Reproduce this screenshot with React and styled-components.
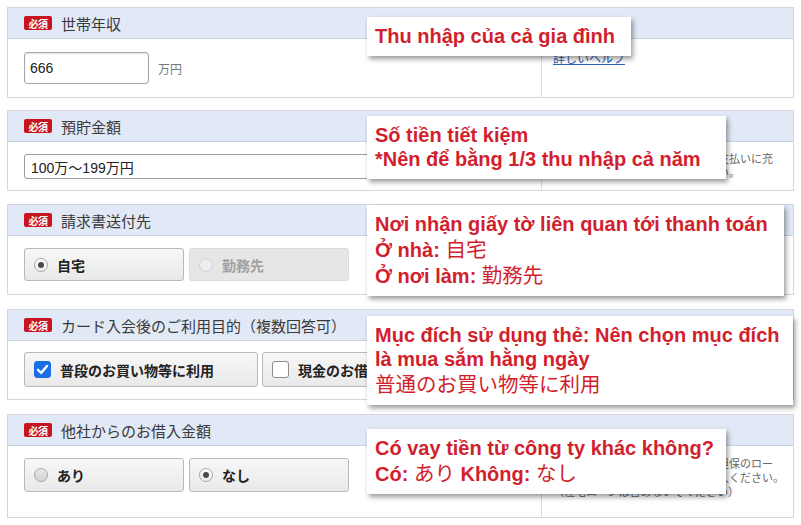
import React from "react";
import styled, { createGlobalStyle, css } from "styled-components";

const Global = createGlobalStyle`
  html, body { margin: 0; padding: 0; background: #fff; }
  body { font-family: "Liberation Sans", "Noto Sans CJK JP", sans-serif; color: #333; }
  * { box-sizing: border-box; }
`;

const Page = styled.div`
  padding: 7px 0 0 7px;
  width: 801px;
`;

const Card = styled.section`
  position: relative;
  width: 787px;
  border: 1px solid #d3d7dd;
  margin-bottom: ${(p) => p.$gap || 13}px;
  background: #fff;
`;

const Header = styled.header`
  height: 31px;
  display: flex;
  align-items: center;
  gap: 9px;
  padding-left: 16px;
  background: #e1e8f6;
  border-bottom: 1px solid #c9d1de;
`;

const Badge = styled.span`
  display: inline-flex;
  align-items: center;
  justify-content: center;
  width: 28px;
  height: 14px;
  border-radius: 2px;
  background: #c8141e;
  color: #fff;
  font-size: 10px;
  font-weight: bold;
  font-family: "Noto Sans CJK JP", sans-serif;
  letter-spacing: -0.5px;
`;

const Title = styled.h2`
  margin: 0;
  font-size: 15px;
  font-weight: normal;
  color: #3a3a3a;
  font-family: "Noto Sans CJK JP", sans-serif;
`;

const Body = styled.div`
  display: grid;
  grid-template-columns: 533px 1fr;
`;

const Main = styled.div`
  display: flex;
  align-items: ${(p) => p.$align || "center"};
  gap: 9px;
  padding: ${(p) => p.$pad || "13px 16px"};
`;

const Side = styled.div`
  border-left: 1px solid #dcdcdc;
  padding: ${(p) => p.$pad || "12px 12px 12px 11px"};
  font-size: 11px;
  line-height: 14px;
  color: #666;
  white-space: nowrap;
  font-family: "Noto Sans CJK JP", sans-serif;
`;

const HelpLink = styled.a`
  color: #2f62b8;
  text-decoration: underline;
  font-size: 12px;
  font-family: "Noto Sans CJK JP", sans-serif;
`;

const TextInput = styled.div`
  width: 125px;
  height: 32px;
  border: 1px solid #a9a9a9;
  border-radius: 3px;
  box-shadow: inset 0 1px 2px rgba(0, 0, 0, 0.12);
  display: flex;
  align-items: center;
  padding-left: 5px;
  font-size: 14px;
  color: #222;
`;

const Unit = styled.span`
  font-size: 12px;
  color: #777;
  font-family: "Noto Sans CJK JP", sans-serif;
`;

const Select = styled.div`
  width: 100%;
  height: 25px;
  border: 1px solid #9a9a9a;
  border-radius: 3px;
  display: flex;
  align-items: center;
  padding-left: 6px;
  font-size: 14px;
  color: #222;
`;

const Choices = styled.div`
  display: flex;
  gap: ${(p) => p.$gap || 5}px;
`;

const ChoiceButton = styled.div`
  width: ${(p) => p.$w}px;
  height: ${(p) => p.$h}px;
  border-radius: 3px;
  display: flex;
  align-items: center;
  gap: 9px;
  padding-left: 9px;
  font-size: 14px;
  font-weight: bold;
  font-family: "Noto Sans CJK JP", sans-serif;
  ${(p) =>
    p.$disabled
      ? css`
          background: #e6e6e6;
          border: 1px solid #dadada;
          color: #a0a0a0;
        `
      : css`
          background: linear-gradient(#f7f7f7, #e9e9e9);
          border: 1px solid #b9b9b9;
          color: #222;
        `}
`;

const Radio = styled.span`
  width: 14px;
  height: 14px;
  border-radius: 50%;
  flex: none;
  display: flex;
  align-items: center;
  justify-content: center;
  border: 1px solid ${(p) => (p.$disabled ? "#cfcfcf" : "#a8a8a8")};
  background: ${(p) =>
    p.$checked
      ? "linear-gradient(#fdfdfd, #ececec)"
      : p.$disabled
      ? "#ececec"
      : "linear-gradient(#e8e8e8, #d2d2d2)"};
  &::after {
    content: "";
    display: ${(p) => (p.$checked ? "block" : "none")};
    width: 6px;
    height: 6px;
    border-radius: 50%;
    background: #4a4a4a;
  }
`;

const Check = styled.span`
  width: 17px;
  height: 17px;
  border-radius: 3px;
  flex: none;
  display: flex;
  align-items: center;
  justify-content: center;
  background: ${(p) => (p.$checked ? "#1b6fe6" : "#fff")};
  border: 1px solid ${(p) => (p.$checked ? "#1b6fe6" : "#8c8c8c")};
`;

const Note = styled.div`
  position: absolute;
  left: 359px;
  top: ${(p) => p.$top}px;
  width: ${(p) => p.$w}px;
  background: #fff;
  padding: 7px 8px 8px;
  box-shadow: 2px 3px 5px rgba(0, 0, 0, 0.4);
  color: #d21f2d;
  font-family: "Liberation Sans", "Noto Sans CJK JP", sans-serif;
  font-size: 20px;
  font-weight: bold;
  line-height: 24px;
  white-space: nowrap;
  z-index: 2;
`;

const NoteLine = styled.div``;

const Jp = styled.span`
  font-family: "Noto Sans CJK JP", sans-serif;
  font-weight: normal;
  font-size: 20.5px;
`;

const CheckMark = () => (
  <svg width="13" height="13" viewBox="0 0 13 13">
    <path d="M2 6.8 L5.2 10 L11 3" fill="none" stroke="#fff" strokeWidth="2.4" strokeLinecap="round" strokeLinejoin="round" />
  </svg>
);

const SectionHead = ({ title }) => (
  <Header>
    <Badge>必須</Badge>
    <Title>{title}</Title>
  </Header>
);

export default function App() {
  return (
    <Page>
      <Global />

      <Card $gap={12}>
        <SectionHead title="世帯年収" />
        <Body>
          <Main $pad="13px 16px 13px">
            <TextInput>666</TextInput>
            <Unit>万円</Unit>
          </Main>
          <Side>
            <HelpLink href="#">詳しいヘルプ</HelpLink>
          </Side>
        </Body>
        <Note $top={9} $w={264}>
          <NoteLine>Thu nhập của cả gia đình</NoteLine>
        </Note>
      </Card>

      <Card>
        <SectionHead title="預貯金額" />
        <Body>
          <Main $pad="12px 16px 11px">
            <Select>100万〜199万円</Select>
          </Main>
          <Side $pad="9px 12px 6px 11px">
            毎月のカードご利用代金などのお支払いに充
            <br />
            てられる預貯金額をお選びください。
          </Side>
        </Body>
        <Note $top={5} $w={359}>
          <NoteLine>Số tiền tiết kiệm</NoteLine>
          <NoteLine>*Nên để bằng 1/3 thu nhập cả năm</NoteLine>
        </Note>
      </Card>

      <Card $gap={14}>
        <SectionHead title="請求書送付先" />
        <Body>
          <Main $pad="12px 16px 13px">
            <Choices>
              <ChoiceButton $w={160} $h={33}>
                <Radio $checked />
                自宅
              </ChoiceButton>
              <ChoiceButton $w={160} $h={33} $disabled>
                <Radio $disabled />
                勤務先
              </ChoiceButton>
            </Choices>
          </Main>
          <Side />
        </Body>
        <Note $top={0} $w={417}>
          <NoteLine>Nơi nhận giấy tờ liên quan tới thanh toán</NoteLine>
          <NoteLine>
            Ở nhà: <Jp>自宅</Jp>
          </NoteLine>
          <NoteLine>
            Ở nơi làm: <Jp>勤務先</Jp>
          </NoteLine>
        </Note>
      </Card>

      <Card $gap={14}>
        <SectionHead title="カード入会後のご利用目的（複数回答可）" />
        <Body>
          <Main $pad="11px 16px 12px">
            <Choices $gap={4}>
              <ChoiceButton $w={234} $h={35}>
                <Check $checked>
                  <CheckMark />
                </Check>
                普段のお買い物等に利用
              </ChoiceButton>
              <ChoiceButton $w={234} $h={35}>
                <Check />
                現金のお借入れに利用
              </ChoiceButton>
            </Choices>
          </Main>
          <Side />
        </Body>
        <Note $top={6} $w={426}>
          <NoteLine>Mục đích sử dụng thẻ: Nên chọn mục đích</NoteLine>
          <NoteLine>là mua sắm hằng ngày</NoteLine>
          <NoteLine>
            <Jp>普通のお買い物等に利用</Jp>
          </NoteLine>
        </Note>
      </Card>

      <Card>
        <SectionHead title="他社からのお借入金額" />
        <Body>
          <Main $pad="12px 16px" $align="flex-start">
            <Choices>
              <ChoiceButton $w={160} $h={34}>
                <Radio />
                あり
              </ChoiceButton>
              <ChoiceButton $w={160} $h={34}>
                <Radio $checked />
                なし
              </ChoiceButton>
            </Choices>
          </Main>
          <Side $pad="10px 12px 19px 11px">
            消費者金融等のキャッシングや無担保のロー
            <br />
            ンなどのお借入れ総額を全てご記入ください。
            <br />
            （住宅ローンは含めないでください）
          </Side>
        </Body>
        <Note $top={14} $w={359}>
          <NoteLine>Có vay tiền từ công ty khác không?</NoteLine>
          <NoteLine>
            Có: <Jp>あり</Jp> Không: <Jp>なし</Jp>
          </NoteLine>
        </Note>
      </Card>
    </Page>
  );
}
